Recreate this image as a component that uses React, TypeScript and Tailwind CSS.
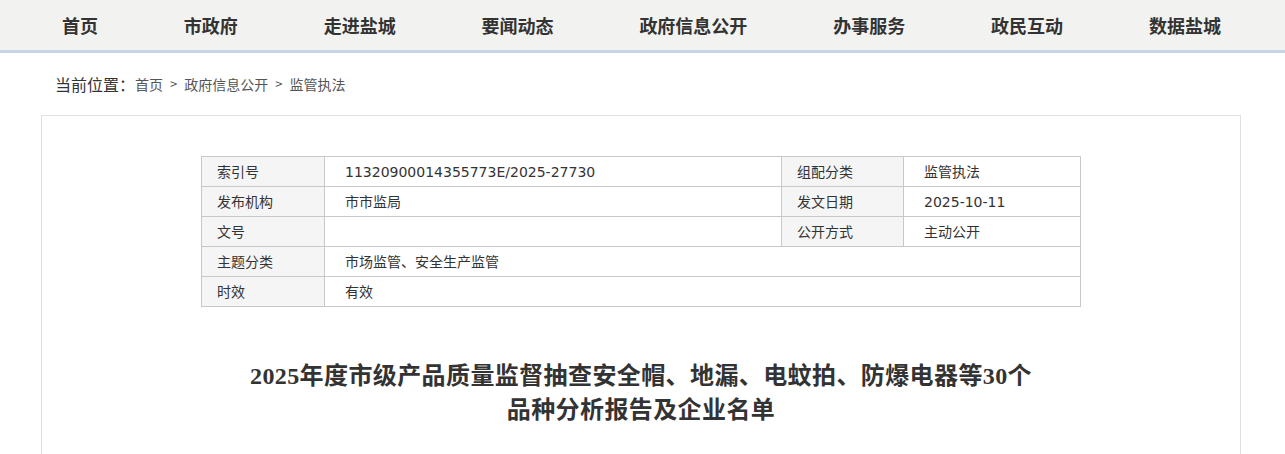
const NAV = ["首页", "市政府", "走进盐城", "要闻动态", "政府信息公开", "办事服务", "政民互动", "数据盐城"];

const cjk = { fontFamily: '"Microsoft YaHei", "Noto Sans CJK SC", sans-serif' };
const latin = { fontFamily: '"DejaVu Sans", "Noto Sans CJK SC", sans-serif' };

function Label({ children }: { children?: React.ReactNode }) {
  return <td className="border border-[#c8c8c8] bg-[#f5f5f5] pl-[15px] text-[14px] text-[#333]">{children}</td>;
}

function Value({ children, colSpan }: { children?: React.ReactNode; colSpan?: number }) {
  return (
    <td colSpan={colSpan} className="border border-[#c8c8c8] pl-[20px] text-[14px] text-[#333]">
      {children}
    </td>
  );
}

export default function App() {
  return (
    <div className="min-h-[454px] bg-white" style={cjk}>
      <div className="h-[53px] border-b-[3px] border-[#c7d4e4] bg-[#f2f2f0]">
        <ul className="ml-[41px] flex h-full w-[1200px] items-center justify-between pl-[21px] pr-[20px]">
          {NAV.map((n) => (
            <li key={n} className="text-[18px] font-bold text-[#333]">
              {n}
            </li>
          ))}
        </ul>
      </div>

      <div className="ml-[41px] w-[1200px]">
        <div className="flex h-[62px] items-center pl-[14px] text-[#555]">
          <span className="text-[16px] text-[#333]">当前位置：</span>
          <span className="text-[14px]">首页</span>
          <span className="mx-[7px] text-[13px]">&gt;</span>
          <span className="text-[14px]">政府信息公开</span>
          <span className="mx-[7px] text-[13px]">&gt;</span>
          <span className="text-[14px]">监管执法</span>
        </div>

        <div className="border border-b-0 border-[#e0e0e0] px-[159px] pt-[40px] pb-[30px]">
          <table className="w-[880px] border-collapse">
            <colgroup>
              <col className="w-[123px]" />
              <col className="w-[457px]" />
              <col className="w-[122px]" />
              <col />
            </colgroup>
            <tbody>
              <tr className="h-[30px]">
                <Label>索引号</Label>
                <Value>
                  <span style={latin}>11320900014355773E/2025-27730</span>
                </Value>
                <Label>组配分类</Label>
                <Value>监管执法</Value>
              </tr>
              <tr className="h-[30px]">
                <Label>发布机构</Label>
                <Value>市市监局</Value>
                <Label>发文日期</Label>
                <Value>
                  <span style={latin}>2025-10-11</span>
                </Value>
              </tr>
              <tr className="h-[30px]">
                <Label>文号</Label>
                <Value />
                <Label>公开方式</Label>
                <Value>主动公开</Value>
              </tr>
              <tr className="h-[30px]">
                <Label>主题分类</Label>
                <Value colSpan={3}>市场监管、安全生产监管</Value>
              </tr>
              <tr className="h-[30px]">
                <Label>时效</Label>
                <Value colSpan={3}>有效</Value>
              </tr>
            </tbody>
          </table>

          <h1
            className="mx-auto mt-[52px] w-[795px] text-center text-[24px] font-bold leading-[34px] tracking-[0.4px] text-[#333]"
            style={{ fontFamily: '"Liberation Serif", "Noto Sans CJK SC", serif' }}
          >
            2025年度市级产品质量监督抽查安全帽、地漏、电蚊拍、防爆电器等30个品种分析报告及企业名单
          </h1>
        </div>
      </div>
    </div>
  );
}
